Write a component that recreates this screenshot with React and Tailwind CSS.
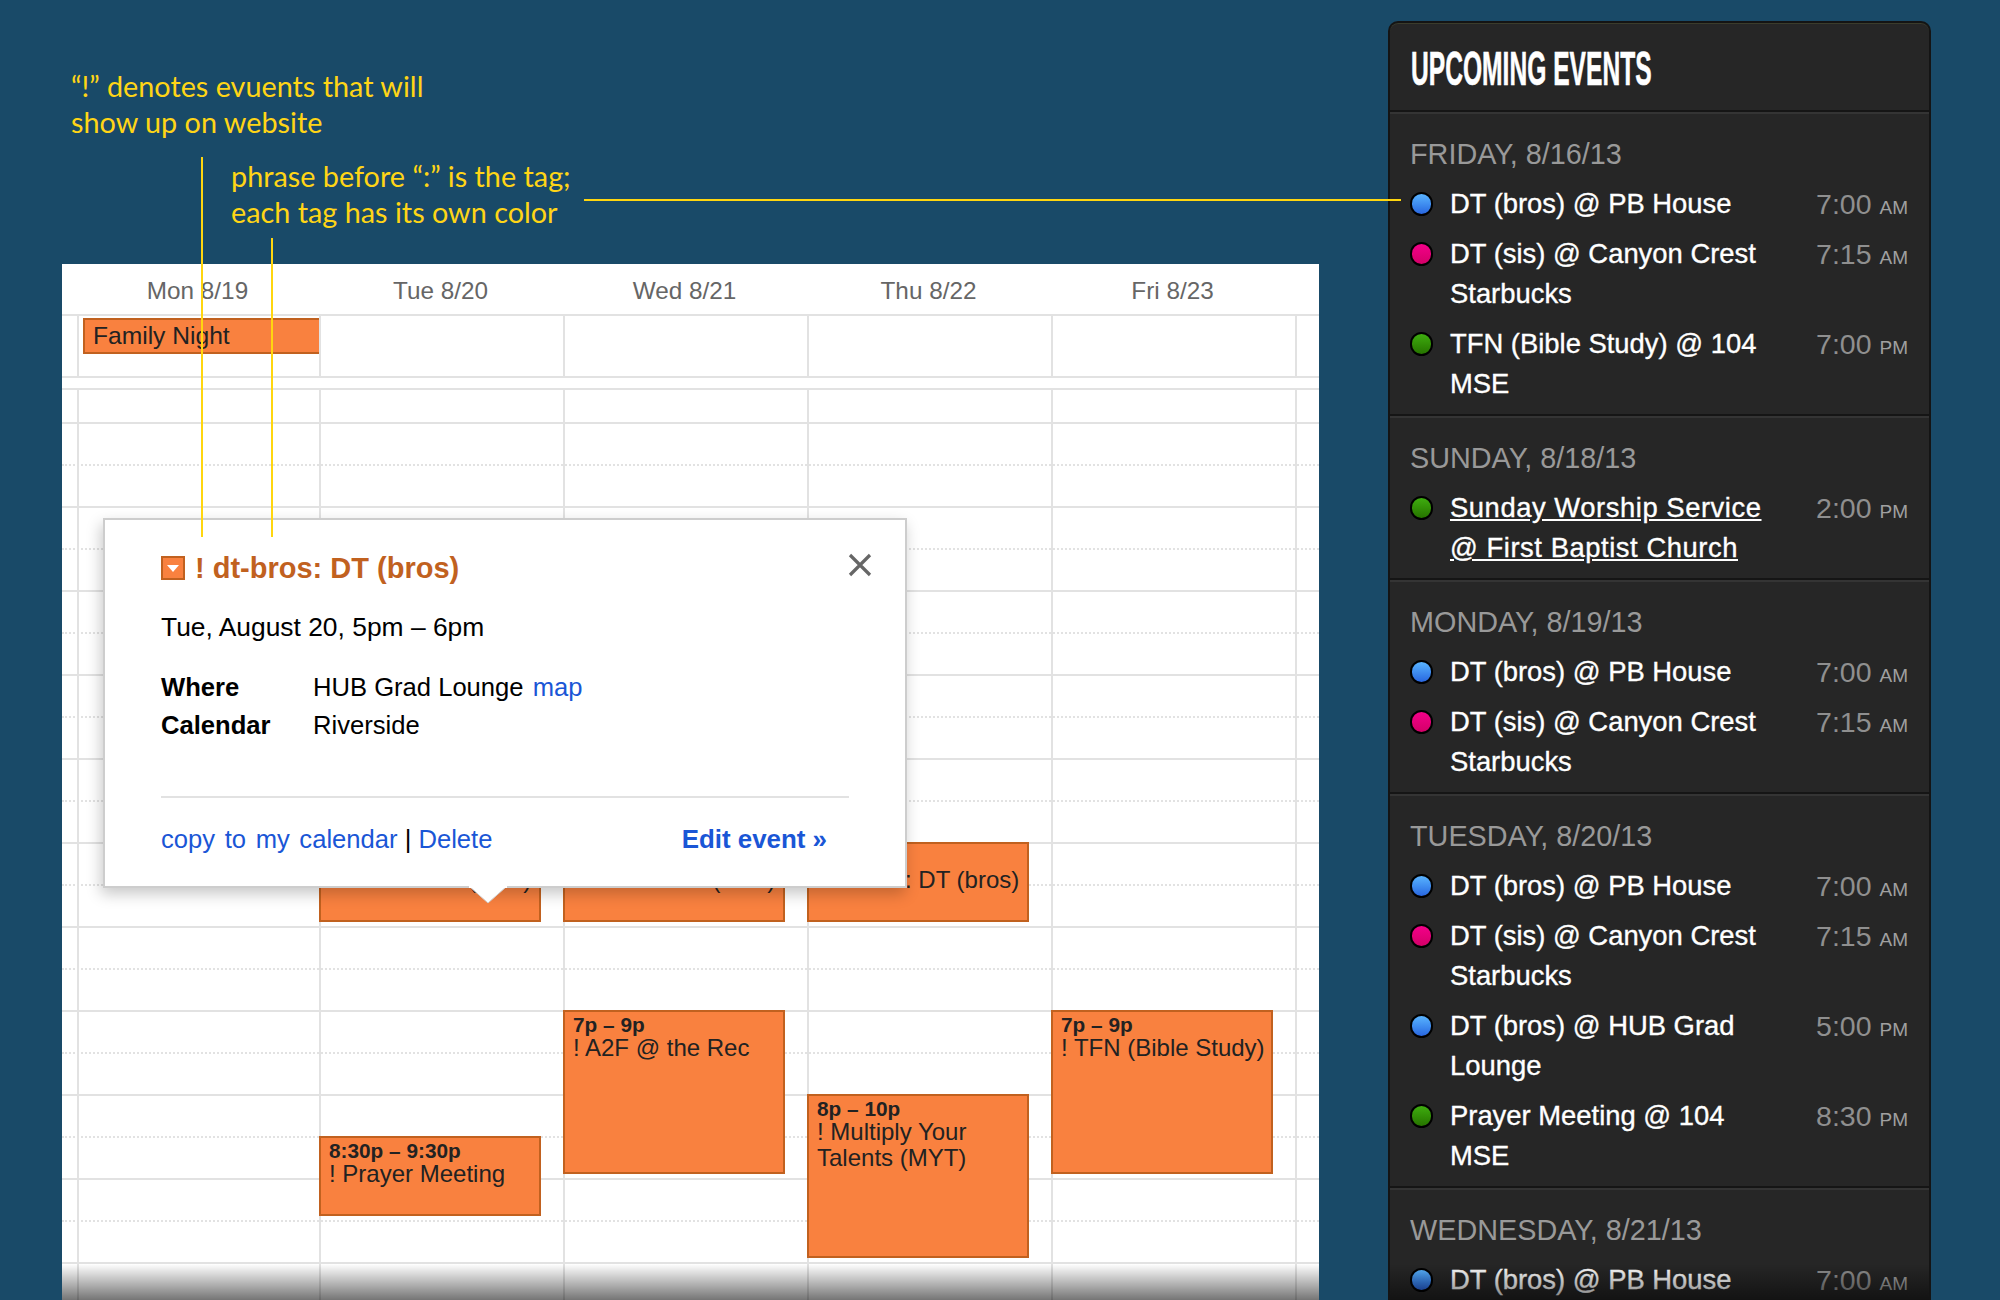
const days = [
  { label: "Mon 8/19", w: "w-[242px]" },
  { label: "Tue 8/20", w: "w-[244px]" },
  { label: "Wed 8/21", w: "w-[244px]" },
  { label: "Thu 8/22", w: "w-[244px]" },
  { label: "Fri 8/23", w: "w-[244px]" },
];

const hours = Array.from({ length: 21 }, (_, i) => i);

const blue = "bg-gradient-to-b from-[#5ab4ff] to-[#2a66e0]";
const pink = "bg-gradient-to-b from-[#f4008a] to-[#d40068]";
const green = "bg-gradient-to-b from-[#3fae10] to-[#267400]";

const sections = [
  {
    date: "FRIDAY, 8/16/13",
    rows: [
      [blue, "DT (bros) @ PB House", "7:00", "AM"],
      [pink, "DT (sis) @ Canyon Crest Starbucks", "7:15", "AM"],
      [green, "TFN (Bible Study) @ 104 MSE", "7:00", "PM"],
    ],
  },
  {
    date: "SUNDAY, 8/18/13",
    rows: [[green, "Sunday Worship Service @ First Baptist Church", "2:00", "PM", true]],
  },
  {
    date: "MONDAY, 8/19/13",
    rows: [
      [blue, "DT (bros) @ PB House", "7:00", "AM"],
      [pink, "DT (sis) @ Canyon Crest Starbucks", "7:15", "AM"],
    ],
  },
  {
    date: "TUESDAY, 8/20/13",
    rows: [
      [blue, "DT (bros) @ PB House", "7:00", "AM"],
      [pink, "DT (sis) @ Canyon Crest Starbucks", "7:15", "AM"],
      [blue, "DT (bros) @ HUB Grad Lounge", "5:00", "PM"],
      [green, "Prayer Meeting @ 104 MSE", "8:30", "PM"],
    ],
  },
  {
    date: "WEDNESDAY, 8/21/13",
    rows: [[blue, "DT (bros) @ PB House", "7:00", "AM"]],
  },
];

function Event({ pos, time, title }) {
  return (
    <div className={`absolute left-[-2px] w-[222px] border-2 border-[#c1611f] bg-[#f9813f] pl-[8px] pt-[2px] text-[#222] ${pos}`}>
      <div className="text-[20.8px] font-bold leading-[22px]">{time}</div>
      <div className="mt-[-1px] text-[24px] leading-[26px]">{title}</div>
    </div>
  );
}

export default function App() {
  return (
    <div className="relative flex h-[1300px] w-[2000px] overflow-hidden bg-[#194a68] font-['Liberation_Sans',Arial,sans-serif]">
      {/* left column */}
      <div className="ml-[62px] w-[1257px] shrink-0">
        <div className="h-[264px] pt-[68px] font-['Lato',sans-serif] text-[28.8px] leading-[36px] text-[#ffd516]">
          <div className="ml-[9px]">
            “!” denotes evuents that will
            <br />
            show up on website
          </div>
          <div className="ml-[169px] mt-[18px]">
            phrase before “:” is the tag;
            <br />
            each tag has its own color
          </div>
        </div>

        {/* calendar */}
        <div className="relative h-[1036px] overflow-hidden bg-white">
          <div className="flex h-[50px] border-b-0 pl-[15px] pt-[7px]">
            {days.map((d) => (
              <div key={d.label} className={`${d.w} pr-[1px] text-center text-[24.3px] leading-[40px] text-[#666]`}>
                {d.label}
              </div>
            ))}
          </div>
          {/* all-day row */}
          <div className="flex h-[64px] border-y-2 border-[#e2e2e2] pl-[15px]">
            <div className="w-[242px] border-l-2 border-[#e2e2e2] pl-[4px] pt-[2px]">
              <div className="h-[36px] w-[238px] border-2 border-[#c1611f] bg-[#f9813f] pl-[8px] pt-[1px] text-[24.6px] leading-[30px] text-[#222]">
                Family Night
              </div>
            </div>
            <div className="w-[244px] border-l-2 border-[#e2e2e2]" />
            <div className="w-[244px] border-l-2 border-[#e2e2e2]" />
            <div className="w-[244px] border-l-2 border-[#e2e2e2]" />
            <div className="w-[244px] border-l-2 border-[#e2e2e2]" />
            <div className="flex-1 border-l-2 border-[#e2e2e2]" />
          </div>
          <div className="h-[10px]" />
          {/* time grid */}
          <div className="relative border-t-2 border-[#e2e2e2]">
            <div className="h-[32px]" />
            {hours.map((i) => (
              <div
                key={i}
                className={
                  i % 2 === 0
                    ? "h-[42px] border-t-2 border-solid border-[#e2e2e2]"
                    : "h-[42px] border-t-2 border-dotted border-[#e2e2e2]"
                }
              />
            ))}
            <div className="absolute inset-0 flex pl-[15px]">
              <div className="w-[242px] border-l-2 border-[#e2e2e2]" />
              <div className="relative w-[244px] border-l-2 border-[#e2e2e2]">
                <Event pos="top-[452px] h-[80px]" time="5p – 6p" title="! dt-bros: DT (bros)" />
                <Event pos="top-[746px] h-[80px]" time="8:30p – 9:30p" title="! Prayer Meeting" />
              </div>
              <div className="relative w-[244px] border-l-2 border-[#e2e2e2]">
                <Event pos="top-[452px] h-[80px]" time="5p – 6p" title="! dt-bros: DT (bros)" />
                <Event pos="top-[620px] h-[164px]" time="7p – 9p" title="! A2F @ the Rec" />
              </div>
              <div className="relative w-[244px] border-l-2 border-[#e2e2e2]">
                <Event pos="top-[452px] h-[80px]" time="5p – 6p" title="! dt-bros: DT (bros)" />
                <Event pos="top-[704px] h-[164px]" time="8p – 10p" title="! Multiply Your Talents (MYT)" />
              </div>
              <div className="relative w-[244px] border-l-2 border-[#e2e2e2]">
                <Event pos="top-[620px] h-[164px]" time="7p – 9p" title="! TFN (Bible Study)" />
              </div>
              <div className="flex-1 border-l-2 border-[#e2e2e2]" />
            </div>
          </div>
          <div className="absolute bottom-0 left-0 right-0 h-[36px] bg-gradient-to-b from-[rgba(0,0,0,0)] to-[rgba(0,0,0,0.54)]" />
        </div>
      </div>

      {/* sidebar */}
      <div className="ml-[69px] mt-[21px] h-[1279px] w-[543px] shrink-0 self-start overflow-hidden rounded-t-[10px] border-x-2 border-t-2 border-[#141414] bg-[#262626] shadow-[inset_0_1px_0_#3a3c2c]">
        <div className="relative h-full">
          <div className="flex h-[87px] items-center overflow-hidden pl-[21px] pt-[5px]">
            <div className="origin-left scale-x-[0.518] whitespace-nowrap text-[47.5px] font-bold leading-none text-white [-webkit-text-stroke:0.6px_#fff]">
              UPCOMING EVENTS
            </div>
          </div>
          {sections.map((s) => (
            <div key={s.date} className="border-t-2 border-[#151515] pb-[10px] pl-[20px] pr-[21px] pt-[22px] shadow-[inset_0_2px_0_#343434]">
              <div className="text-[28.8px] leading-[40px] text-[#999]">{s.date}</div>
              <div className="mt-[10px] flex flex-col gap-[10px]">
                {s.rows.map((r, i) => (
                  <div key={i} className="flex">
                    <div className={`mt-[8px] h-[24px] w-[23px] shrink-0 rounded-full border-2 border-black ${r[0]}`} />
                    <div className={`ml-[17px] w-[330px] text-[27.4px] leading-[40px] text-white [-webkit-text-stroke:0.35px_#fff] ${r[4] ? "underline tracking-[0.55px]" : ""}`}>
                      {r[1]}
                    </div>
                    <div className="ml-auto h-[40px] whitespace-nowrap text-[28.5px] leading-[40px] text-[#8f8f8f]">
                      {r[2]} <span className="text-[19px] text-[#a0a0a0]">{r[3]}</span>
                    </div>
                  </div>
                ))}
              </div>
            </div>
          ))}
          <div className="absolute bottom-0 left-0 right-0 h-[36px] bg-gradient-to-b from-[rgba(0,0,0,0)] to-[rgba(0,0,0,0.5)]" />
        </div>
      </div>

      {/* popup */}
      <div className="absolute left-[103px] top-[518px] h-[370px] w-[804px] border-2 border-[#cdcdcd] bg-white pl-[56px] pt-[36px] text-[25.6px] text-black shadow-[-2px_6px_14px_rgba(0,0,0,0.22)]">
        <div className="flex h-[24px] items-center">
          <div className="flex h-[24px] w-[24px] items-center justify-center border-2 border-[#c1611f] bg-[#f9813f]">
            <svg width="12" height="7" viewBox="0 0 12 7">
              <polygon points="0,0 12,0 6,7" fill="#fff" />
            </svg>
          </div>
          <div className="ml-[10px] whitespace-nowrap pt-[2px] text-[29px] font-bold text-[#c1611f]">! dt-bros: DT (bros)</div>
        </div>
        <div className="mt-[32px] text-[26.4px] leading-[30px]">Tue, August 20, 5pm – 6pm</div>
        <div className="mt-[26px] flex leading-[38px]">
          <div className="w-[152px] font-bold">Where</div>
          <div>
            HUB Grad Lounge <span className="ml-[2px] text-[#1a56d6]">map</span>
          </div>
        </div>
        <div className="flex leading-[38px]">
          <div className="w-[152px] font-bold">Calendar</div>
          <div>Riverside</div>
        </div>
        <div className="mt-[52px] h-[2px] w-[688px] bg-[#e2e2e2]" />
        <div className="mt-[26px] flex w-[688px] justify-between pr-[22px] leading-[30px]">
          <div>
            <span className="text-[#1a56d6] [word-spacing:2.5px]">copy to my calendar</span> | <span className="text-[#1a56d6]">Delete</span>
          </div>
          <div className="text-[25.9px] font-bold text-[#1a56d6]">Edit event »</div>
        </div>
        <svg className="absolute left-[743px] top-[33px]" width="24" height="24" viewBox="0 0 24 24">
          <path d="M2 2 L22 22 M22 2 L2 22" stroke="#666" strokeWidth="3.2" fill="none" />
        </svg>
      </div>
      <svg className="absolute left-[469px] top-[886px]" width="38" height="18" viewBox="0 0 38 18">
        <polygon points="1,1 37,1 19,17" fill="#fff" stroke="#cfcfcf" strokeWidth="1" />
        <rect x="0" y="0" width="38" height="2" fill="#fff" />
      </svg>

      {/* annotation leader lines */}
      <div className="absolute left-[201px] top-[157px] h-[380px] w-[2px] bg-[#ffd60f]" />
      <div className="absolute left-[271px] top-[238px] h-[299px] w-[2px] bg-[#ffd60f]" />
      <div className="absolute left-[584px] top-[199px] h-[2px] w-[817px] bg-[#ffd60f]" />
    </div>
  );
}
